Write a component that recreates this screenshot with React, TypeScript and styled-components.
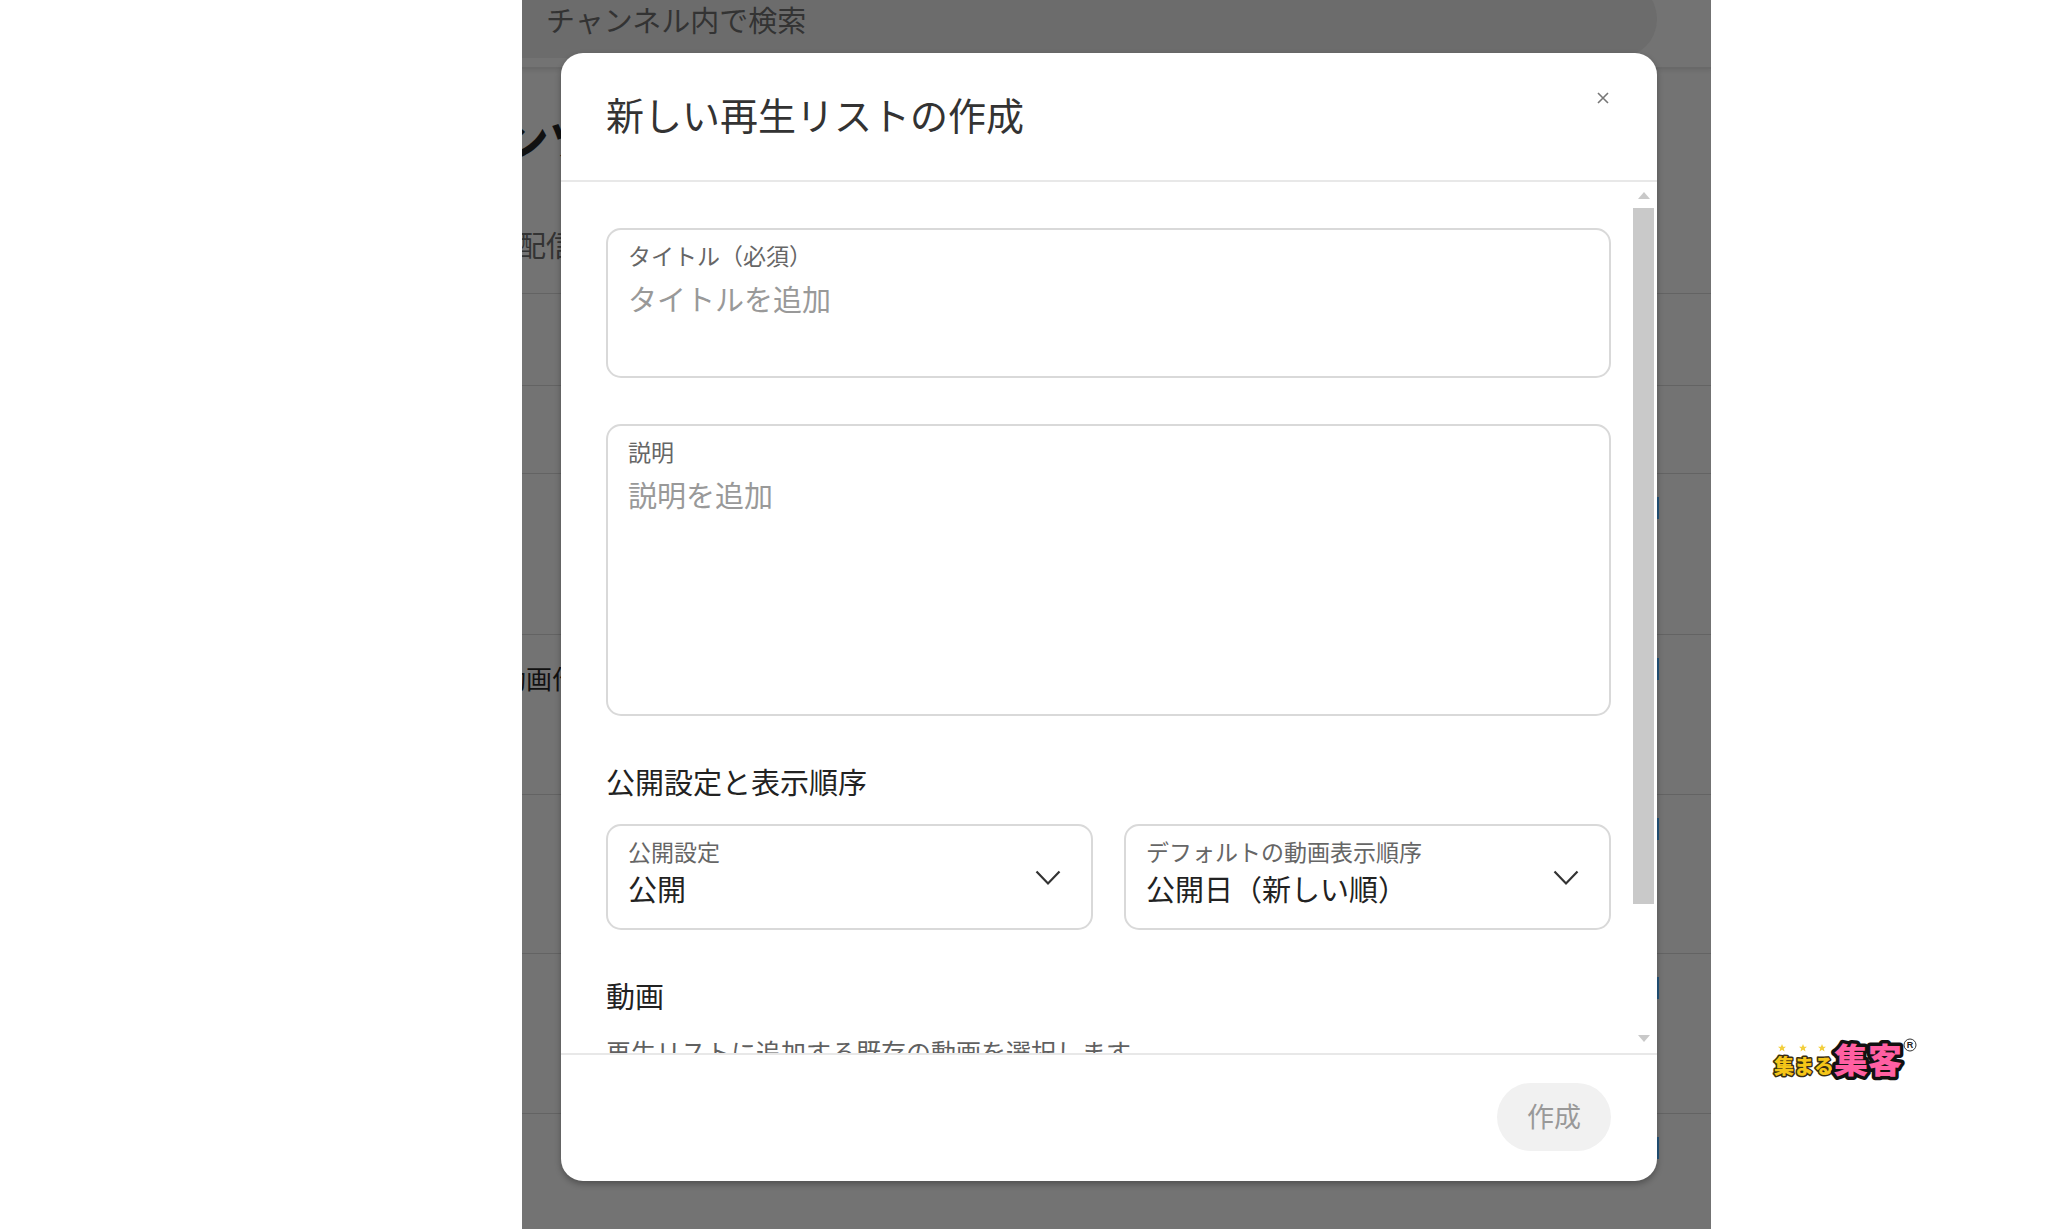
import React from "react";
import styled, { createGlobalStyle } from "styled-components";

const GlobalStyle = createGlobalStyle`
  *, *::before, *::after { box-sizing: border-box; }
  body {
    margin: 0;
    background: #fff;
    overflow: hidden;
    font-family: "Noto Sans CJK JP", "Noto Sans", sans-serif;
    color: #333;
  }
  h1, h2, p, ul { margin: 0; padding: 0; font-weight: 400; }
  button, input, textarea, select { font: inherit; color: inherit; }
`;

const Page = styled.div`
  display: grid;
  grid-template-columns: minmax(0, 522fr) minmax(0, 1189fr) minmax(0, 337fr);
  height: 100vh;
`;

const Stage = styled.main`
  grid-column: 2;
  position: relative;
  overflow: hidden;
  background: #737373;
`;

const TopBar = styled.div`
  display: flex;
  align-items: flex-start;
  height: 69px;
  padding-right: 54px;
  border-bottom: 2px solid #696969;
  box-shadow: 0 2px 4px rgba(0, 0, 0, 0.08);
`;

const SearchPill = styled.div`
  flex: 1;
  display: flex;
  align-items: center;
  height: 78px;
  margin: -20px 0 0 -60px;
  padding-left: 84px;
  border-radius: 39px;
  background: #6c6c6c;
  color: #333;
  font-size: 29px;
  line-height: 40px;
`;

const PageHeading = styled.h2`
  height: 141px;
  padding-top: 36px;
  margin-left: -21px;
  color: #111;
  font-size: 48px;
  font-weight: 700;
  line-height: 64px;
  white-space: nowrap;
`;

const TabName = styled.p`
  height: 83px;
  padding-top: 14px;
  margin-left: -5px;
  color: #333;
  font-size: 29px;
  line-height: 40px;
`;

const Rows = styled.ul`
  list-style: none;
`;

const Row = styled.li<{ $height: number }>`
  display: flex;
  justify-content: space-between;
  align-items: flex-start;
  height: ${(p) => p.$height}px;
  padding: 23px 52px 0 0;
  border-top: 1px solid #636363;
  color: #111;
  font-size: 26px;
  line-height: 40px;
  white-space: nowrap;
`;

const RowTitle = styled.span`
  margin-left: -22px;
`;

const RowMark = styled.span`
  width: 22px;
  height: 22px;
  margin-left: auto;
  background: #24557d;
`;

const Overlay = styled.div`
  position: absolute;
  inset: 0;
  display: flex;
  padding: 53px 54px 48px 39px;
`;

const Dialog = styled.section`
  flex: 1;
  min-width: 0;
  display: flex;
  flex-direction: column;
  overflow: hidden;
  border-radius: 22px;
  background: #fff;
  box-shadow: 0 3px 6px rgba(0, 0, 0, 0.3);
`;

const DialogHeader = styled.header`
  display: flex;
  justify-content: space-between;
  align-items: flex-start;
  height: 129px;
  padding: 33px 42px 0 45px;
  border-bottom: 2px solid #e8e8e8;
`;

const DialogTitle = styled.h1`
  font-size: 38px;
  line-height: 56px;
`;

const CloseButton = styled.button`
  display: grid;
  place-items: center;
  width: 24px;
  height: 24px;
  padding: 0;
  border: 0;
  background: none;
`;

const Body = styled.div`
  flex: 1;
  min-height: 0;
  display: flex;
`;

const FormArea = styled.form`
  flex: 1;
  min-width: 0;
  overflow-y: auto;
  scrollbar-width: none;
  padding: 46px 22px 46px 45px;
`;

const Field = styled.div<{ $height: number }>`
  position: relative;
  display: flex;
  flex-direction: column;
  height: ${(p) => p.$height}px;
  padding: 9px 20px;
  border: 2px solid #d9d9d9;
  border-radius: 15px;
`;

const TextFields = styled.div`
  display: grid;
  gap: 46px;
`;

const FieldLabel = styled.label`
  color: #666;
  font-size: 23px;
  line-height: 32px;
`;

const TextInput = styled.input`
  height: 40px;
  margin-top: 7px;
  padding: 0;
  border: 0;
  outline: 0;
  background: none;
  font-size: 29px;
  line-height: 40px;

  &::placeholder { color: #999; opacity: 1; }
`;

const TextArea = styled.textarea`
  flex: 1;
  margin-top: 7px;
  padding: 0;
  border: 0;
  outline: 0;
  background: none;
  resize: none;
  font-size: 29px;
  line-height: 40px;

  &::placeholder { color: #999; opacity: 1; }
`;

const SectionTitle = styled.h2`
  margin-top: 45px;
  color: #222;
  font-size: 29px;
  line-height: 40px;
`;

const SelectRow = styled.div`
  display: grid;
  grid-template-columns: 1fr 1fr;
  gap: 31px;
  margin-top: 23px;
`;

const Select = styled.select`
  height: 40px;
  margin-top: 1px;
  padding: 0;
  border: 0;
  outline: 0;
  appearance: none;
  background: none;
  color: #222;
  font-size: 29px;
  line-height: 40px;
`;

const Chevron = styled.svg`
  position: absolute;
  top: 44px;
  right: 30px;
  pointer-events: none;
`;

const Hint = styled.p`
  margin-top: 18px;
  color: #606060;
  font-size: 25px;
  line-height: 36px;
`;

const ScrollTrack = styled.div`
  display: flex;
  flex-direction: column;
  align-items: center;
  width: 21px;
  margin-right: 3px;
  padding: 9px 0 10px;
`;

const ScrollThumb = styled.div`
  flex: 16;
  width: 100%;
  margin-top: 9px;
  background: #c9c9c9;
`;

const ScrollRest = styled.div`
  flex: 3;
`;

const DialogFooter = styled.footer`
  display: flex;
  justify-content: flex-end;
  align-items: flex-start;
  height: 128px;
  padding: 28px 46px 0;
  border-top: 2px solid #e8e8e8;
`;

const CreateButton = styled.button`
  width: 114px;
  height: 68px;
  padding: 0 0 3px;
  border: 0;
  border-radius: 34px;
  background: #f1f1f1;
  font-size: 27px;
  line-height: 40px;

  &:disabled { color: #999; }
`;

const BrandColumn = styled.aside`
  display: flex;
  align-items: flex-end;
  padding: 0 0 144px 56px;
`;

const BrandText = styled.text`
  font-family: "Noto Sans CJK JP", sans-serif;
  font-weight: 900;
  stroke-linejoin: round;
`;

const RegisteredMark = styled.text`
  font-family: "Liberation Sans", sans-serif;
  font-weight: 700;
`;

const STAR = "M0 -4 L1.1 -1.3 L4 -1.2 L1.8 .6 L2.5 3.4 L0 1.8 L-2.5 3.4 L-1.8 .6 L-4 -1.2 L-1.1 -1.3 Z";

const rows = [
  { height: 92 },
  { height: 88 },
  { height: 161, mark: true },
  { height: 160, mark: true, title: "動画作" },
  { height: 159, mark: true },
  { height: 160, mark: true },
  { height: 160, mark: true },
];

function Arrow({ down }: { down?: boolean }) {
  return (
    <svg width="12" height="8" viewBox="0 0 12 8" aria-hidden="true">
      <path d={down ? "M0 0H12L6 7Z" : "M0 8H12L6 1Z"} fill="#c9c9c9" />
    </svg>
  );
}

function SelectField({ id, label, options }: { id: string; label: string; options: string[] }) {
  return (
    <Field $height={106}>
      <FieldLabel htmlFor={id}>{label}</FieldLabel>
      <Select id={id}>
        {options.map((o) => (
          <option key={o}>{o}</option>
        ))}
      </Select>
      <Chevron width="26" height="16" viewBox="0 0 26 16" aria-hidden="true">
        <path d="M1.5 1.5L13 13.5L24.5 1.5" fill="none" stroke="#333" strokeWidth="2.2" />
      </Chevron>
    </Field>
  );
}

function BrandLogo() {
  return (
    <svg width="150" height="52" viewBox="0 0 150 52" role="img" aria-label="集まる集客">
      {[15, 36, 55].map((x) => (
        <path key={x} d={STAR} transform={`translate(${x} 15)`} fill="#f3cf3c" />
      ))}
      <BrandText x="7" y="41" fontSize="20" fill="#f5c518" stroke="#3a2f10" strokeWidth="3" paintOrder="stroke">
        集まる
      </BrandText>
      <BrandText x="67" y="40" fontSize="34" fill="#ff5fa2" stroke="#111" strokeWidth="7" paintOrder="stroke">
        集客
      </BrandText>
      <circle cx="143" cy="12" r="6" fill="#fff" stroke="#333" strokeWidth="1" />
      <RegisteredMark x="143" y="15" fontSize="9" textAnchor="middle" fill="#222">R</RegisteredMark>
    </svg>
  );
}

export default function App() {
  return (
    <>
      <GlobalStyle />
      <Page>
        <Stage>
          <TopBar>
            <SearchPill>チャンネル内で検索</SearchPill>
          </TopBar>
          <PageHeading>ンツ</PageHeading>
          <TabName>配信</TabName>
          <Rows>
            {rows.map((r, i) => (
              <Row key={i} $height={r.height}>
                {r.title && <RowTitle>{r.title}</RowTitle>}
                {r.mark && <RowMark />}
              </Row>
            ))}
          </Rows>
          <Overlay>
            <Dialog role="dialog" aria-labelledby="dialog-title">
              <DialogHeader>
                <DialogTitle id="dialog-title">新しい再生リストの作成</DialogTitle>
                <CloseButton type="button" aria-label="閉じる">
                  <svg width="12" height="12" viewBox="0 0 12 12" aria-hidden="true">
                    <path d="M1 1L11 11M11 1L1 11" stroke="#777" strokeWidth="1.6" />
                  </svg>
                </CloseButton>
              </DialogHeader>
              <Body>
                <FormArea id="playlist-form">
                  <TextFields>
                    <Field $height={150}>
                      <FieldLabel htmlFor="title">タイトル（必須）</FieldLabel>
                      <TextInput id="title" placeholder="タイトルを追加" />
                    </Field>
                    <Field $height={292}>
                      <FieldLabel htmlFor="description">説明</FieldLabel>
                      <TextArea id="description" placeholder="説明を追加" />
                    </Field>
                  </TextFields>
                  <SectionTitle>公開設定と表示順序</SectionTitle>
                  <SelectRow>
                    <SelectField id="visibility" label="公開設定" options={["公開"]} />
                    <SelectField id="order" label="デフォルトの動画表示順序" options={["公開日（新しい順）"]} />
                  </SelectRow>
                  <SectionTitle>動画</SectionTitle>
                  <Hint>再生リストに追加する既存の動画を選択します</Hint>
                </FormArea>
                <ScrollTrack aria-hidden="true">
                  <Arrow />
                  <ScrollThumb />
                  <ScrollRest />
                  <Arrow down />
                </ScrollTrack>
              </Body>
              <DialogFooter>
                <CreateButton type="submit" form="playlist-form" disabled>
                  作成
                </CreateButton>
              </DialogFooter>
            </Dialog>
          </Overlay>
        </Stage>
        <BrandColumn>
          <BrandLogo />
        </BrandColumn>
      </Page>
    </>
  );
}
